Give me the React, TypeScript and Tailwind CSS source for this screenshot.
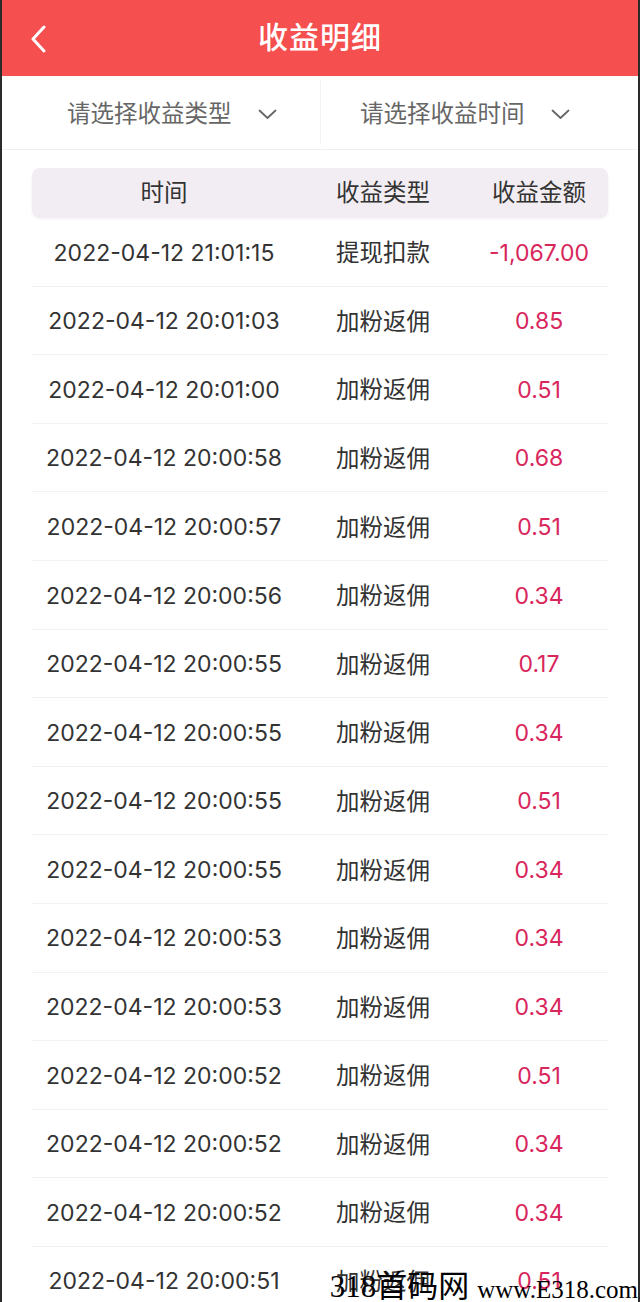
import React from 'react';

const rows: [string, string, string][] = [
  ['2022-04-12 21:01:15', '提现扣款', '-1,067.00'],
  ['2022-04-12 20:01:03', '加粉返佣', '0.85'],
  ['2022-04-12 20:01:00', '加粉返佣', '0.51'],
  ['2022-04-12 20:00:58', '加粉返佣', '0.68'],
  ['2022-04-12 20:00:57', '加粉返佣', '0.51'],
  ['2022-04-12 20:00:56', '加粉返佣', '0.34'],
  ['2022-04-12 20:00:55', '加粉返佣', '0.17'],
  ['2022-04-12 20:00:55', '加粉返佣', '0.34'],
  ['2022-04-12 20:00:55', '加粉返佣', '0.51'],
  ['2022-04-12 20:00:55', '加粉返佣', '0.34'],
  ['2022-04-12 20:00:53', '加粉返佣', '0.34'],
  ['2022-04-12 20:00:53', '加粉返佣', '0.34'],
  ['2022-04-12 20:00:52', '加粉返佣', '0.51'],
  ['2022-04-12 20:00:52', '加粉返佣', '0.34'],
  ['2022-04-12 20:00:52', '加粉返佣', '0.34'],
  ['2022-04-12 20:00:51', '加粉返佣', '0.51'],
];

const Chevron = () => (
  <svg width="19" height="11" viewBox="0 0 19 11" fill="none" stroke="#666" strokeWidth="1.8" strokeLinecap="round" strokeLinejoin="round">
    <path d="M1.5 1.5L9.5 9L17.5 1.5" />
  </svg>
);

export default function App() {
  return (
    <div
      className="relative h-[1302px] overflow-hidden bg-white border-x-2 border-[#2b2b2b]"
      style={{ fontFamily: 'Inter, "Noto Sans CJK SC", sans-serif' }}
    >
      {/* Header */}
      <div className="relative h-[76px] bg-[#f54f4f] flex items-center justify-center">
        <svg className="absolute left-[27px] top-[25px]" width="18" height="28" viewBox="0 0 18 28" fill="none" stroke="white" strokeWidth="3" strokeLinecap="round" strokeLinejoin="round">
          <path d="M15 2L4 14L15 26" />
        </svg>
        <h1 className="text-[30px] font-medium text-white tracking-[1px] -mt-[2px]">收益明细</h1>
      </div>

      {/* Filters */}
      <div className="h-[74px] grid grid-cols-2 border-b border-[#f0f0f0]">
        <div className="flex items-center gap-[26px] pl-[65px] pt-[3px]">
          <span className="text-[23.5px] text-[#666]">请选择收益类型</span>
          <Chevron />
        </div>
        <div className="flex items-center gap-[26px] pl-[39px] pt-[3px] border-l border-[#f3f3f3] my-1">
          <span className="text-[23.5px] text-[#666]">请选择收益时间</span>
          <Chevron />
        </div>
      </div>

      {/* Table */}
      <div className="mx-[30px] mt-[18px]">
        <div className="grid grid-cols-[264px_174px_1fr] h-[50px] items-center rounded-lg bg-[#f2edf2] shadow-[0_1px_3px_rgba(0,0,0,0.06)] text-[23.5px] text-[#333]">
          <div className="text-center">时间</div>
          <div className="text-center">收益类型</div>
          <div className="text-center">收益金额</div>
        </div>
        {rows.map(([time, type, amount], i) => (
          <div
            key={i}
            className="grid grid-cols-[264px_174px_1fr] h-[68.6px] items-center border-b border-[#f2f2f2] pt-[2px]"
          >
            <div className="text-center text-[23px] text-[#333]">{time}</div>
            <div className="text-center text-[23.5px] text-[#333]">{type}</div>
            <div className="text-center text-[23px] text-[#d8265c]">{amount}</div>
          </div>
        ))}
      </div>

      {/* Watermark */}
      <div
        className="absolute right-0 bottom-0 flex items-end gap-2 text-black"
        style={{ fontFamily: '"Liberation Serif", "Noto Sans CJK SC", serif' }}
      >
        <span className="text-[31px] leading-none">318首码网</span>
        <span className="text-[25px] leading-none">www.E318.com</span>
      </div>
    </div>
  );
}
